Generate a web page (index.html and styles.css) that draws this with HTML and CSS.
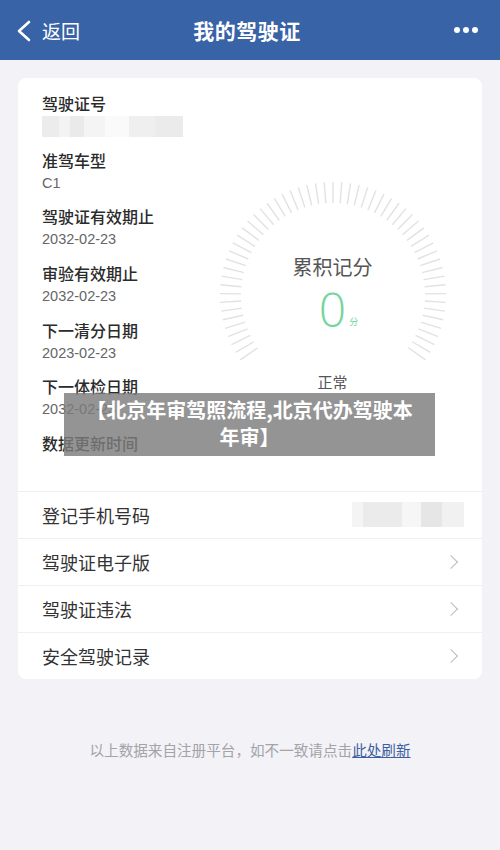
FILE: index.html
```html
<!DOCTYPE html>
<html lang="zh-CN">
  <head>
    <meta charset="UTF-8" />
    <meta name="viewport" content="width=device-width, initial-scale=1.0" />
    <title>我的驾驶证</title>
    <link rel="stylesheet" href="styles.css">
  </head>
  <body>
    <!-- 顶部导航 -->
    <header class="nav">
      <a class="nav-back" href="#">
        <svg width="16" height="22" viewBox="0 0 16 22"><path d="M13 2 L3 11 L13 20" fill="none" stroke="#fff" stroke-width="2.6" stroke-linecap="round" stroke-linejoin="round"/></svg>
        <span>返回</span>
      </a>
      <h1 class="nav-title">我的驾驶证</h1>
      <div class="nav-more"><i></i><i></i><i></i></div>
    </header>

    <main class="page">
      <section class="card">
        <div class="info">
          <ul class="info-list">
            <li><div class="label">驾驶证号</div><div class="value"><span class="blur blur-id"></span></div></li>
            <li><div class="label">准驾车型</div><div class="value">C1</div></li>
            <li><div class="label">驾驶证有效期止</div><div class="value">2032-02-23</div></li>
            <li><div class="label">审验有效期止</div><div class="value">2032-02-23</div></li>
            <li><div class="label">下一清分日期</div><div class="value">2023-02-23</div></li>
            <li><div class="label">下一体检日期</div><div class="value">2032-02-23</div></li>
            <li><div class="label">数据更新时间</div><div class="value"></div></li>
          </ul>

          <div class="score">
            <div class="gauge">
              <svg id="ticks" width="240" height="230" viewBox="0 0 240 230"></svg>
              <div class="gauge-body">
                <div class="gauge-title">累积记分</div>
                <div class="gauge-num">0<small>分</small></div>
                <div class="gauge-state">正常</div>
              </div>
            </div>
          </div>
        </div>

        <ul class="menu">
          <li><span>登记手机号码</span><span class="blur blur-phone"></span></li>
          <li><span>驾驶证电子版</span><span class="chev"></span></li>
          <li><span>驾驶证违法</span><span class="chev"></span></li>
          <li><span>安全驾驶记录</span><span class="chev"></span></li>
        </ul>
      </section>

      <p class="note">以上数据来自注册平台，如不一致请点击<a href="#">此处刷新</a></p>
    </main>

    <div class="banner">【北京年审驾照流程,北京代办驾驶本年审】</div>

    <script src="script.js"></script>
  </body>
</html>
```

FILE: styles.css
```css
html,
body {
  margin: 0;
  padding: 0;
  width: 100%;
  height: 100%;
  overflow: hidden;
}

body {
  font-family: "Noto Sans CJK SC", "Noto Sans", sans-serif;
  background: #f2f2f7;
  color: #333;
  position: relative;
}

ul {
  list-style: none;
  margin: 0;
  padding: 0;
}

/* 导航 */
.nav {
  height: 60px;
  background: #3963a7;
  display: flex;
  align-items: center;
  justify-content: space-between;
  padding: 0 22px 0 16px;
  color: #fff;
  position: relative;
}

.nav-back {
  display: flex;
  align-items: center;
  gap: 10px;
  color: #fff;
  text-decoration: none;
  font-size: 19px;
  width: 100px;
}

.nav-back svg {
  margin-top: 1px;
}

.nav-title {
  margin: 0;
  font-size: 21px;
  font-weight: 700;
  letter-spacing: 0.5px;
}

.nav-more {
  width: 100px;
  display: flex;
  justify-content: flex-end;
  gap: 3px;
}

.nav-more i {
  width: 6px;
  height: 6px;
  border-radius: 50%;
  background: #fff;
}

/* 卡片 */
.page {
  padding: 18px 18px 0;
}

.card {
  background: #fff;
  border-radius: 8px;
  overflow: hidden;
}

.info {
  display: flex;
  padding: 14px 0 2px 24px;
  border-bottom: 1px solid #efeff2;
}

.info-list {
  width: 170px;
}

.info-list li {
  margin-bottom: 10.7px;
}

.label {
  font-size: 16px;
  line-height: 22px;
  font-weight: 500;
  color: #2b2b2b;
}

.value {
  font-family: "Liberation Sans", "Noto Sans CJK SC", sans-serif;
  font-size: 14.5px;
  line-height: 24px;
  height: 24px;
  color: #666;
  display: flex;
  align-items: center;
}

.blur {
  display: inline-block;
  background: linear-gradient(90deg, #ececec 0 12%, #f3f3f3 12% 20%, #eaeaea 20% 30%, #f4f4f4 30% 45%, #fafafa 45% 62%, #efefef 62% 80%, #ebebeb 80% 100%);
}

.blur-id {
  width: 141px;
  height: 21px;
}

.blur-phone {
  width: 112px;
  height: 25px;
  background: linear-gradient(90deg, #f4f4f4 0 10%, #ebebeb 10% 45%, #f6f6f6 45% 62%, #e6e6e6 62% 80%, #f1f1f1 80% 100%);
}

/* 记分仪表 */
.score {
  flex: 1;
  display: flex;
  justify-content: center;
  padding: 83px 29px 0 0;
}

.gauge {
  position: relative;
  width: 240px;
  height: 230px;
}

.gauge svg {
  position: absolute;
  inset: 0;
}

.gauge-body {
  position: relative;
  display: flex;
  flex-direction: column;
  align-items: center;
  padding-top: 79px;
}

.gauge-title {
  font-size: 20px;
  line-height: 26px;
  color: #555;
}

.gauge-num {
  font-family: "Open Sans", "Liberation Sans", sans-serif;
  font-weight: 300;
  font-size: 48px;
  line-height: 54px;
  color: #74d59d;
  margin-top: 2px;
  position: relative;
}

.gauge-num small {
  position: absolute;
  left: 100%;
  bottom: 9px;
  margin-left: 3px;
  font-family: "Noto Sans CJK SC", sans-serif;
  font-size: 9px;
  line-height: 10px;
  font-weight: 400;
}

.gauge-state {
  font-size: 15px;
  line-height: 20px;
  color: #555;
  margin-top: 36px;
}

/* 菜单 */
.menu li {
  height: 46px;
  display: flex;
  align-items: center;
  justify-content: space-between;
  padding: 0 18px 0 24px;
  font-size: 18px;
  color: #333;
  border-top: 1px solid #efeff2;
}

.menu li:first-child {
  border-top: none;
  height: 46px;
}

.chev {
  width: 9px;
  height: 9px;
  border-top: 1.5px solid #bcbcbc;
  border-right: 1.5px solid #bcbcbc;
  transform: rotate(45deg);
  margin-right: 8px;
}

.note {
  margin: 60px 0 0;
  text-align: center;
  font-size: 14.6px;
  color: #a3a3a8;
}

.note a {
  color: #3d5f9f;
  text-decoration: underline;
}

/* 覆盖标题 */
.banner {
  position: absolute;
  left: 64px;
  top: 393px;
  width: 371px;
  height: 63px;
  padding: 3px 17px 0;
  box-sizing: border-box;
  background: rgba(125, 125, 125, 0.82);
  color: #fff;
  font-size: 20px;
  font-weight: 700;
  line-height: 27px;
  text-align: center;
}
```

FILE: script.js
```js
// 仪表刻度
const svg = document.getElementById("ticks");
const cx = 120, cy = 120, r1 = 92, r2 = 113;
const count = 57;
const start = 215, end = -35;

for (let i = 0; i < count; i++) {
  const deg = start - (start - end) * i / (count - 1);
  const a = deg * Math.PI / 180;
  const line = document.createElementNS("http://www.w3.org/2000/svg", "line");
  line.setAttribute("x1", cx + r1 * Math.cos(a));
  line.setAttribute("y1", cy - r1 * Math.sin(a));
  line.setAttribute("x2", cx + r2 * Math.cos(a));
  line.setAttribute("y2", cy - r2 * Math.sin(a));
  line.setAttribute("stroke", "#e2e2e2");
  line.setAttribute("stroke-width", "1.4");
  svg.appendChild(line);
}
```
